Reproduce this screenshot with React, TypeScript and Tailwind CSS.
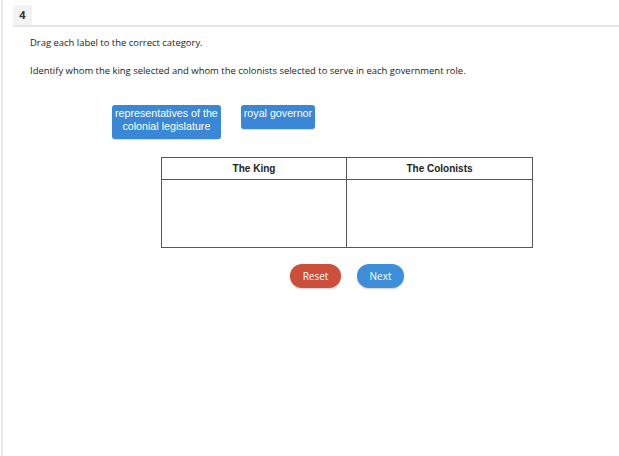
import React from 'react';

const labels = [
  { id: 'reps', lines: ['representatives of the', 'colonial legislature'] },
  { id: 'gov', lines: ['royal governor'] },
];

const App: React.FC = () => {
  return (
    <div className="w-[619px] h-[456px] bg-white overflow-hidden" style={{ fontFamily: '"Open Sans", sans-serif' }}>
      <div className="ml-[1px] h-full border-l-2 border-[#ebebeb]">
        <div className="pt-[5px] pl-[10px]">
          <div className="flex border-b-2 border-[#e6e6e6]">
            <div className="w-[19px] h-[20px] bg-[#f3f3f3] flex items-center justify-center text-[11px] font-bold text-[#333]">
              4
            </div>
          </div>
        </div>

        <div className="pl-[27px] pt-[9px] text-[9.45px] text-[#222] leading-[14px]">
          <p>Drag each label to the correct category.</p>
          <p className="mt-[14px]">Identify whom the king selected and whom the colonists selected to serve in each government role.</p>
        </div>

        <div className="flex items-start gap-[20px] pl-[109px] mt-[27px]" style={{ fontFamily: '"Liberation Sans", Arial, sans-serif' }}>
          {labels.map((l) => (
            <div
              key={l.id}
              className="min-h-[24px] bg-[#3a87d7] text-white text-[10.7px] leading-[13px] text-center whitespace-nowrap rounded-[3px] px-[3px] pt-[2px] pb-[6px] shadow-[0_1px_1px_rgba(0,0,0,0.15)]"
            >
              {l.lines.map((t) => (
                <div key={t}>{t}</div>
              ))}
            </div>
          ))}
        </div>

        <div className="ml-[158px] mt-[18px] w-[372px] border border-[#555] grid grid-cols-2" style={{ fontFamily: '"Liberation Sans", Arial, sans-serif' }}>
          <div className="h-[22px] flex items-center justify-center text-[10px] font-bold text-[#222] border-b border-r border-[#555]">The King</div>
          <div className="h-[22px] flex items-center justify-center text-[10px] font-bold text-[#222] border-b border-[#555]">The Colonists</div>
          <div className="h-[67px] border-r border-[#555]"></div>
          <div className="h-[67px]"></div>
        </div>

        <div className="flex gap-[16px] ml-[287px] mt-[16px]">
          <button className="w-[51px] h-[24px] rounded-full bg-[#cc4f3b] text-white text-[10px] shadow-[0_1px_2px_rgba(0,0,0,0.2)]">Reset</button>
          <button className="w-[47px] h-[24px] rounded-full bg-[#3d8ed9] text-white text-[10px] shadow-[0_1px_2px_rgba(0,0,0,0.2)]">Next</button>
        </div>
      </div>
    </div>
  );
};

export default App;
